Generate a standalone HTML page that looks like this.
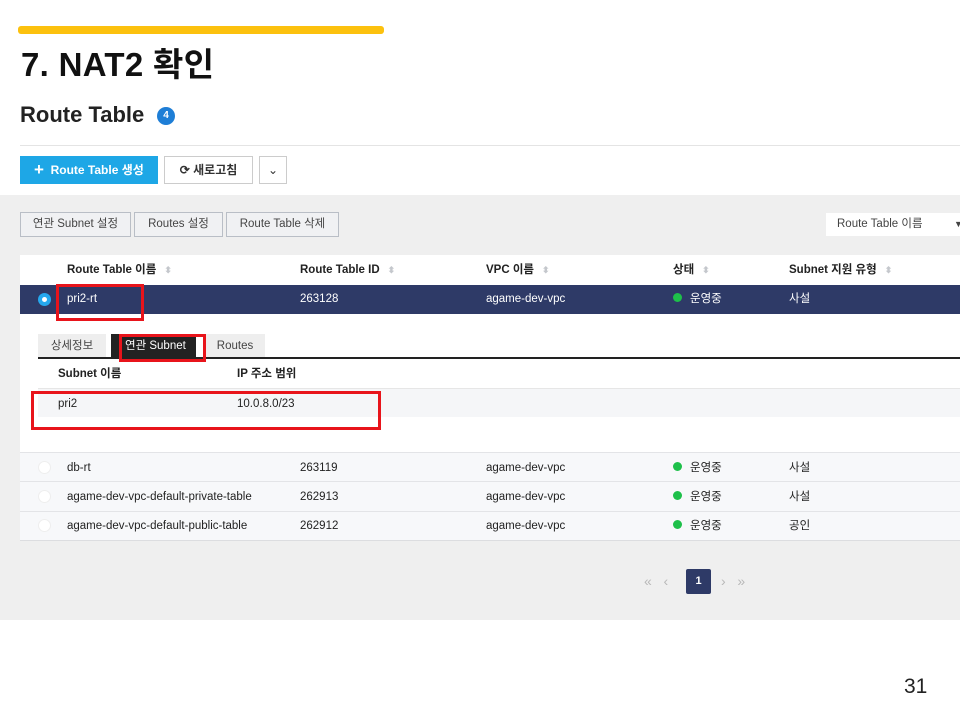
<!DOCTYPE html>
<html><head><meta charset="utf-8"><style>
*{margin:0;padding:0;box-sizing:border-box}
body{width:960px;height:720px;overflow:hidden;background:#fff;font-family:"Liberation Sans","Noto Sans CJK KR",sans-serif;position:relative;color:#222}
.a{position:absolute}
.t{font-size:11.5px;white-space:nowrap;line-height:14px;height:14px}
.b{font-weight:bold}
.btn{position:absolute;border:1px solid #b9bec6;background:#f0f1f3;font-size:11.5px;color:#444;text-align:center;line-height:23px;height:25px}
.red{position:absolute;border:3px solid #e8141b}
.dot{display:inline-block;width:9px;height:9px;border-radius:50%;background:#1ec04a;margin-right:8px;vertical-align:0px}
.rad{position:absolute;width:13px;height:13px;border-radius:50%;background:#fff;border:1px solid #eee}
.sort{color:#c4c7cc;font-size:9px;margin-left:8px}
</style></head><body>
<div class="a" style="left:18px;top:26px;width:366px;height:8px;background:#fcc10e;border-radius:3px"></div>
<div class="a b" style="left:21px;top:45px;font-size:33px;line-height:40px;color:#111;letter-spacing:0.3px">7. NAT2 확인</div>
<div class="a b" style="left:20px;top:101px;font-size:22px;line-height:28px;color:#222">Route Table</div>
<div class="a" style="left:157px;top:107px;width:18px;height:18px;border-radius:50%;background:#1e7ed6;color:#fff;font-size:10px;font-weight:bold;text-align:center;line-height:18px">4</div>
<div class="a" style="left:20px;top:145px;width:940px;height:1px;background:#e4e4e4"></div>
<div class="a b" style="left:20px;top:156px;width:138px;height:28px;background:#1ea7e6;color:#fff;font-size:12px;line-height:28px;padding-left:14px"><span style="font-size:17px;vertical-align:-1px">+</span>&nbsp;&nbsp;Route Table 생성</div>
<div class="a b" style="left:164px;top:156px;width:89px;height:28px;border:1px solid #ccc;font-size:12px;line-height:26px;text-align:center;color:#333">⟳ 새로고침</div>
<div class="a" style="left:259px;top:156px;width:28px;height:28px;border:1px solid #ccc;text-align:center;line-height:26px;color:#333;font-size:12px">⌄</div>
<div class="a" style="left:0;top:195px;width:960px;height:425px;background:#efefef"></div>
<div class="btn" style="left:20px;top:212px;width:111px">연관 Subnet 설정</div>
<div class="btn" style="left:134px;top:212px;width:89px">Routes 설정</div>
<div class="btn" style="left:226px;top:212px;width:113px">Route Table 삭제</div>
<div class="a" style="left:826px;top:213px;width:140px;height:23px;background:#fff;line-height:23px;padding-left:11px;color:#444;font-size:11.5px;white-space:nowrap">Route Table 이름<span style="position:absolute;left:128px;font-size:9px">▼</span></div>
<div class="a" style="left:20px;top:255px;width:940px;height:286px;background:#fff"></div>
<div class="a t b" style="left:67px;top:263px">Route Table 이름<span class="sort">⬍</span></div>
<div class="a t b" style="left:300px;top:263px">Route Table ID<span class="sort">⬍</span></div>
<div class="a t b" style="left:486px;top:263px">VPC 이름<span class="sort">⬍</span></div>
<div class="a t b" style="left:673px;top:263px">상태<span class="sort">⬍</span></div>
<div class="a t b" style="left:789px;top:263px">Subnet 지원 유형<span class="sort">⬍</span></div>
<div class="a" style="left:20px;top:285px;width:940px;height:29px;background:#2e3a67"></div>
<div class="a" style="left:38px;top:293px;width:13px;height:13px;border-radius:50%;background:#25a8ee;padding:4px"><div style="width:5px;height:5px;background:#fff;border-radius:50%"></div></div>
<div class="a t" style="left:67px;top:292px;color:#fff">pri2-rt</div>
<div class="a t" style="left:300px;top:292px;color:#fff">263128</div>
<div class="a t" style="left:486px;top:292px;color:#fff">agame-dev-vpc</div>
<div class="a t" style="left:673px;top:292px;color:#fff"><span class="dot"></span>운영중</div>
<div class="a t" style="left:789px;top:292px;color:#fff">사설</div>
<div class="a" style="left:38px;top:334px;width:68px;height:24px;background:#eeeeee;text-align:center;line-height:24px;color:#444;font-size:11.5px">상세정보</div>
<div class="a" style="left:111px;top:334px;width:85px;height:24px;background:#222;color:#fff;line-height:24px;padding-left:14px;font-size:11.5px;white-space:nowrap">연관 Subnet</div>
<div class="a" style="left:205px;top:334px;width:60px;height:24px;background:#eeeeee;text-align:center;line-height:24px;color:#444;font-size:11.5px">Routes</div>
<div class="a" style="left:38px;top:357px;width:922px;height:2px;background:#222"></div>
<div class="a t b" style="left:58px;top:367px">Subnet 이름</div>
<div class="a t b" style="left:237px;top:367px">IP 주소 범위</div>
<div class="a" style="left:38px;top:388px;width:922px;height:29px;background:#f5f6f8;border-top:1px solid #e6e6e6"></div>
<div class="a t" style="left:58px;top:397px">pri2</div>
<div class="a t" style="left:237px;top:397px">10.0.8.0/23</div>
<div class="a" style="left:20px;top:452px;width:940px;height:89px;background:#f7f8fa"></div>
<div class="a" style="left:20px;top:452px;width:940px;height:1px;background:#e3e4e7"></div>
<div class="a" style="left:20px;top:481px;width:940px;height:1px;background:#e3e4e7"></div>
<div class="a" style="left:20px;top:511px;width:940px;height:1px;background:#e3e4e7"></div>
<div class="a" style="left:20px;top:540px;width:940px;height:1px;background:#dcdde0"></div>
<div class="rad" style="left:38px;top:461px"></div>
<div class="rad" style="left:38px;top:490px"></div>
<div class="rad" style="left:38px;top:519px"></div>
<div class="a t" style="left:67px;top:461px">db-rt</div>
<div class="a t" style="left:67px;top:490px">agame-dev-vpc-default-private-table</div>
<div class="a t" style="left:67px;top:519px">agame-dev-vpc-default-public-table</div>
<div class="a t" style="left:300px;top:461px">263119</div>
<div class="a t" style="left:300px;top:490px">262913</div>
<div class="a t" style="left:300px;top:519px">262912</div>
<div class="a t" style="left:486px;top:461px">agame-dev-vpc</div>
<div class="a t" style="left:486px;top:490px">agame-dev-vpc</div>
<div class="a t" style="left:486px;top:519px">agame-dev-vpc</div>
<div class="a t" style="left:673px;top:461px"><span class="dot"></span>운영중</div>
<div class="a t" style="left:673px;top:490px"><span class="dot"></span>운영중</div>
<div class="a t" style="left:673px;top:519px"><span class="dot"></span>운영중</div>
<div class="a t" style="left:789px;top:461px">사설</div>
<div class="a t" style="left:789px;top:490px">사설</div>
<div class="a t" style="left:789px;top:519px">공인</div>
<div class="a" style="left:644px;top:573px;font-size:14px;line-height:16px;color:#b8b8b8">«&nbsp;&nbsp;&nbsp;‹</div>
<div class="a b" style="left:686px;top:569px;width:25px;height:25px;background:#2e3a67;color:#fff;font-size:11px;text-align:center;line-height:25px;border-radius:2px">1</div>
<div class="a" style="left:721px;top:573px;font-size:14px;line-height:16px;color:#b8b8b8">›&nbsp;&nbsp;&nbsp;»</div>
<div class="red" style="left:56px;top:284px;width:88px;height:37px"></div>
<div class="red" style="left:119px;top:334px;width:87px;height:28px"></div>
<div class="red" style="left:31px;top:391px;width:350px;height:39px"></div>
<div class="a" style="left:904px;top:675px;font-size:21px;line-height:24px;color:#222">31</div>
</body></html>
